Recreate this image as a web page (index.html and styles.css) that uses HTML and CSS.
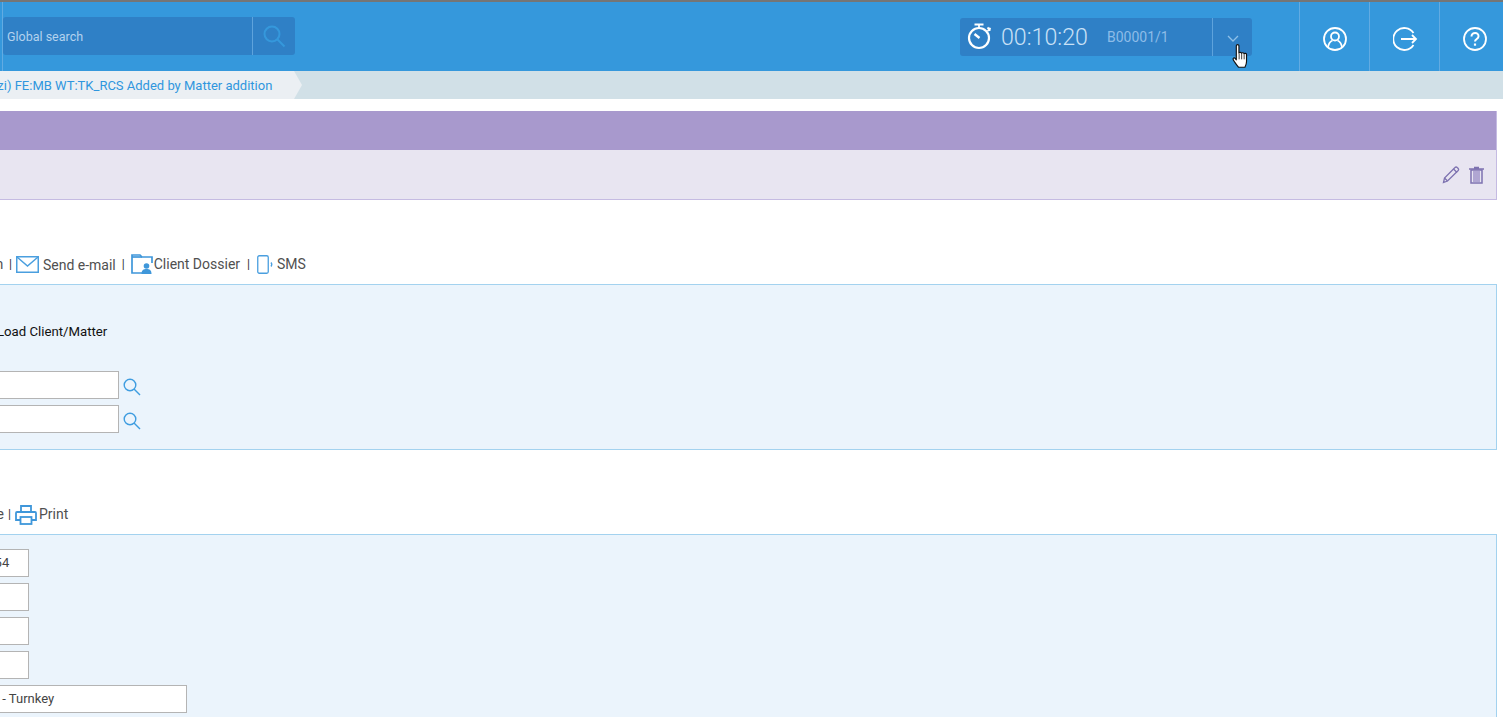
FILE: index.html
```html
<!DOCTYPE html>
<html lang="en">
<head>
<meta charset="utf-8">
<title>Matter</title>
<link rel="stylesheet" href="styles.css">
</head>
<body>
<header class="header">
  <div class="search">
    <span class="search-label">Global search</span>
    <span class="search-btn">
      <svg width="24" height="24" viewBox="0 0 24 24" fill="none" stroke="#3598dc" stroke-width="2"><circle cx="10" cy="10" r="7.5"/><path d="M15.5 15.5l7 7"/></svg>
    </span>
  </div>
  <div class="timer">
    <svg class="timer-icon" width="26" height="27" viewBox="0 0 26 27" fill="none" stroke="#fff" stroke-width="2.200"><circle cx="12" cy="15" r="10"/><path d="M7.500 1.500h9M12 2v3M20.500 4.500l3 3M20.500 8l3-3" stroke-width="1.800"/><path d="M7.500 11l5 4" stroke-width="2.400"/></svg>
    <span class="timer-time">00:10:20</span>
    <span class="timer-code">B00001/1</span>
    <span class="timer-toggle">
      <svg width="12" height="7" viewBox="0 0 12 7" fill="none" stroke="#8fc0e8" stroke-width="1.300"><path d="M1 1l5 5 5-5"/></svg>
    </span>
  </div>
  <nav class="nav">
    <a class="nav-item">
      <svg width="24" height="24" viewBox="0 0 24 24" fill="none" stroke="#fff" stroke-width="1.800"><circle cx="12" cy="12" r="11"/><circle cx="12" cy="9.500" r="4"/><path d="M5 20c.8-4 3-6 4.500-6.500M19 20c-.8-4-3-6-4.500-6.500"/></svg>
    </a>
    <a class="nav-item nav-item-exit">
      <svg width="25" height="24" viewBox="0 0 25 24" fill="none" stroke="#fff" stroke-width="1.800"><path d="M20.500 6A11 11 0 1 0 20.500 18"/><path d="M8 12h15M19 8l4 4-4 4"/></svg>
    </a>
    <a class="nav-item">
      <svg width="24" height="24" viewBox="0 0 24 24" fill="none" stroke="#fff" stroke-width="1.800"><circle cx="12" cy="12" r="11"/><path d="M8.500 9.500c0-5 7.500-4.500 7 0 0 2.500-3.500 2.500-3.500 5" stroke-width="2"/><path d="M12 16.500v2.200" stroke-width="2.200"/></svg>
    </a>
  </nav>
</header>

<div class="crumbs">
  <div class="crumb"><span class="crumb-text">(Mazzi) FE:MB WT:TK_RCS Added by Matter addition</span></div>
  <svg class="crumb-tip" width="10" height="28" viewBox="0 0 10 28"><path d="M0 0l8 14-8 14z" fill="#ebeff3"/></svg>
</div>

<main class="main">
  <section class="card">
    <div class="card-head"></div>
    <div class="card-body">
      <svg width="18" height="19" viewBox="0 0 18 19" fill="none" stroke="#7d72b0" stroke-width="1.300"><path d="M1.500 17.500l1-4.500L13 2.500a1.500 1.500 0 0 1 2.200 0l1 1a1.500 1.500 0 0 1 0 2L5.500 16z"/><path d="M11.500 4l3.500 3.500M2.500 13l3 3"/></svg>
      <svg width="15" height="18" viewBox="0 0 15 18" fill="none" stroke="#7d72b0"><path d="M0 3h15M5 1.500h5" stroke-width="1.500"/><rect x="2" y="4" width="11" height="13" stroke-width="1.500"/><path d="M4 5v11h7V5z" fill="#b0a6d2" stroke="none"/></svg>
    </div>
  </section>

  <div class="toolbar toolbar-first">
    <span class="tool-clip">Alarm</span>
    <span class="sep sep-a">|</span>
    <svg class="tool-icon-mail" width="23" height="17" viewBox="0 0 23 17" fill="none" stroke="#4a9fdf" stroke-width="1.500"><rect x=".75" y=".75" width="21.500" height="15.500"/><path d="M1 1l10.500 9L22 1"/></svg>
    <span class="tool-text">Send e-mail</span>
    <span class="sep sep-b">|</span>
    <svg class="tool-icon-folder" width="22" height="20" viewBox="0 0 22 20" fill="none" stroke="#3f97da" stroke-width="1.700"><path d="M11 19H1V1h8l2 2h10v6"/><path d="M1 3h10"/><circle cx="15.500" cy="12" r="2.800" fill="#3f97da" stroke="none"/><path d="M10.500 20c0-4 2-5 5-5s5 1 5 5z" fill="#3f97da" stroke="none"/></svg>
    <span class="tool-text tool-text-raised tool-dossier">Client Dossier</span>
    <span class="sep sep-c">|</span>
    <svg class="tool-icon-phone" width="17" height="19" viewBox="0 0 17 19" fill="none" stroke="#4a9fdf" stroke-width="1.300"><rect x=".75" y=".75" width="10.500" height="17.500" rx="1.500"/><path d="M14 7.500c.8 1 .8 3 0 4"/></svg>
    <span class="tool-text tool-text-raised tool-sms">SMS</span>
  </div>

  <section class="panel panel-load">
    <p class="load-title"><span class="load-clip">Load Client/Matter</span></p>
    <div class="field-row">
      <div class="input input-wide"></div>
      <svg class="search-icon" width="18" height="18" viewBox="0 0 18 18" fill="none" stroke="#3f9de0" stroke-width="1.400"><circle cx="7" cy="7" r="5.800"/><path d="M11 11l6 6"/></svg>
    </div>
    <div class="field-row">
      <div class="input input-wide"></div>
      <svg class="search-icon" width="18" height="18" viewBox="0 0 18 18" fill="none" stroke="#3f9de0" stroke-width="1.400"><circle cx="7" cy="7" r="5.800"/><path d="M11 11l6 6"/></svg>
    </div>
  </section>

  <div class="toolbar toolbar-second">
    <span class="tool-clip-e">Save</span>
    <span class="sep sep-d">|</span>
    <svg class="tool-icon-print" width="22" height="20" viewBox="0 0 22 20" fill="none" stroke="#3f97da" stroke-width="1.800"><path d="M6 7V1h10v6"/><path d="M5 15H1V8a1 1 0 0 1 1-1h18a1 1 0 0 1 1 1v7h-4"/><rect x="5.500" y="12" width="11" height="7"/></svg>
    <span class="tool-text tool-text-raised">Print</span>
  </div>

  <section class="panel panel-detail">
    <div class="input input-short"><span class="input-clip">1254</span></div>
    <div class="input input-short"></div>
    <div class="input input-short"></div>
    <div class="input input-short"></div>
    <div class="input input-long"><span class="input-clip-long">ABC - Turnkey</span></div>
  </section>
</main>

<svg class="cursor" width="16" height="25" viewBox="0 0 13.500 22"><path d="M3.500 1.500c0-1.300 2.300-1.300 2.300 0V8c.5-1 2.200-.8 2.300.2.500-.8 2.100-.6 2.200.4.600-.7 2.200-.4 2.200.7v6c0 2-.6 3.500-1.400 5.200H5.500C4 18.500 1 15 .7 13.500c-.3-1.200 1-1.700 1.800-.9l1 1.300z" fill="#fff" stroke="#111" stroke-width="1" stroke-linejoin="round"/><path d="M6 8.500v5M8.200 8.500v5M10.400 9v4.500" stroke="#111" stroke-width=".7"/></svg>
</body>
</html>
```
FILE: styles.css
```css
* { box-sizing: border-box; }
html, body { margin: 0; height: 717px; overflow: hidden; }
body { font-family: Roboto, "Liberation Sans", sans-serif; background: #fff; position: relative; width: 1503px; }

.header {
  height: 71px;
  background: #3598dc;
  border-top: 2px solid #757575;
  display: flex;
  align-items: flex-start;
  padding-left: 3px;
  width: 1510px;
  position: relative;
}
.header::before {
  content: "";
  position: absolute;
  left: 2px;
  top: 0;
  bottom: 0;
  width: 1px;
  background: #62abe2;
}
.search {
  margin-top: 15px;
  width: 292px;
  height: 38px;
  background: #2f80c6;
  border-radius: 3px;
  display: flex;
  align-items: center;
  justify-content: space-between;
}
.search-label { font-size: 12.500px; color: #b3d2ee; padding-left: 4px; }
.search-btn { width: 43px; height: 38px; border-left: 1px solid #5ea3dc; display: flex; align-items: center; justify-content: center; }

.timer {
  margin-top: 16px;
  margin-left: 665px;
  width: 292px;
  height: 38px;
  background: #2f80c6;
  border-radius: 3px;
  display: flex;
  align-items: center;
  color: #c9e1f6;
  padding-left: 7px;
}
.timer-icon { flex: none; margin-top: -1px; }
.timer-time { font-size: 23.200px; font-weight: 300; margin-left: 8px; width: 106px; }
.timer-code { font-size: 14px; color: #8dbce8; width: 105px; }
.timer-toggle { width: 40px; height: 38px; border-left: 1px solid #5ea3dc; display: flex; align-items: center; justify-content: center; padding-top: 3px; margin-left: auto; }

.nav { display: flex; margin-left: 47px; height: 69px; }
.nav-item { width: 70px; height: 69px; border-left: 1px solid #62abe2; display: flex; align-items: center; justify-content: center; padding-top: 4px; }
.nav-item-exit { padding-left: 2px; }

.crumbs { height: 28px; background: #d1e0e7; display: flex; }
.crumb { width: 294px; height: 28px; background: #ebeff3; overflow: hidden; display: flex; align-items: center; }
.crumb-text { font-size: 13px; color: #2f96de; white-space: nowrap; margin-left: -32px; }
.crumb-tip { flex: none; }

.main { padding-right: 6px; padding-top: 12px; }
.card { border-right: 1px solid #c5bbe2; border-bottom: 1px solid #c5bbe2; }
.card-head { height: 39px; background: #a899cd; }
.card-body {
  height: 49px;
  background: #e8e5f1;
  display: flex;
  align-items: center;
  justify-content: flex-end;
  gap: 9px;
  padding-right: 12px;
}

.toolbar { display: flex; align-items: center; font-size: 14px; color: #505050; height: 20px; white-space: nowrap; margin-bottom: 10px; }
.toolbar-first { margin-top: 54px; }
.toolbar-second { margin-top: 54px; }
.tool-clip { margin-left: -34px; width: 37px; }
.tool-clip-e { margin-left: -26px; width: 29px; }
.sep { font-size: 12px; color: #333; }
.sep-a { margin-left: 6px; }
.sep-b { margin-left: 6px; }
.sep-c { margin-left: 7px; }
.sep-d { margin-left: 5px; }
.tool-icon-mail { margin-left: 4px; flex: none; }
.tool-icon-folder { margin-left: 6px; flex: none; }
.tool-icon-phone { margin-left: 7px; flex: none; }
.tool-icon-print { margin-left: 4px; flex: none; margin-top: 2px; }
.tool-text { margin-left: 4px; padding-top: 1px; }
.tool-text-raised { margin-left: 2px; padding-top: 0; }
.tool-dossier { margin-left: 1px; }
.tool-sms { margin-left: 3px; }

.panel { background: #ebf4fc; border: 1px solid #a3d2ef; border-left: 0; }
.panel-load { height: 166px; padding-top: 39px; }
.load-title { margin: 0 0 32px; font-size: 13.200px; color: #111; line-height: 15px; height: 15px; overflow: hidden; }
.load-clip { display: block; margin-left: -3px; }

.field-row { display: flex; align-items: center; height: 28px; margin-bottom: 6px; }
.input { background: #fff; border: 1px solid #b4b4b4; border-left: 0; height: 28px; font-size: 13px; color: #444; display: flex; align-items: center; white-space: nowrap; overflow: hidden; flex: none; padding-bottom: 2px; }
.input-wide { width: 119px; }
.input-short { width: 29px; margin-bottom: 6px; }
.input-long { width: 187px; }
.search-icon { margin-left: 4px; flex: none; margin-top: 4px; }

.panel-detail { height: 220px; padding-top: 14px; }
.input-clip { margin-left: -20px; }
.input-clip-long { margin-left: -26px; }

.cursor { position: absolute; left: 1232px; top: 44px; }
```
